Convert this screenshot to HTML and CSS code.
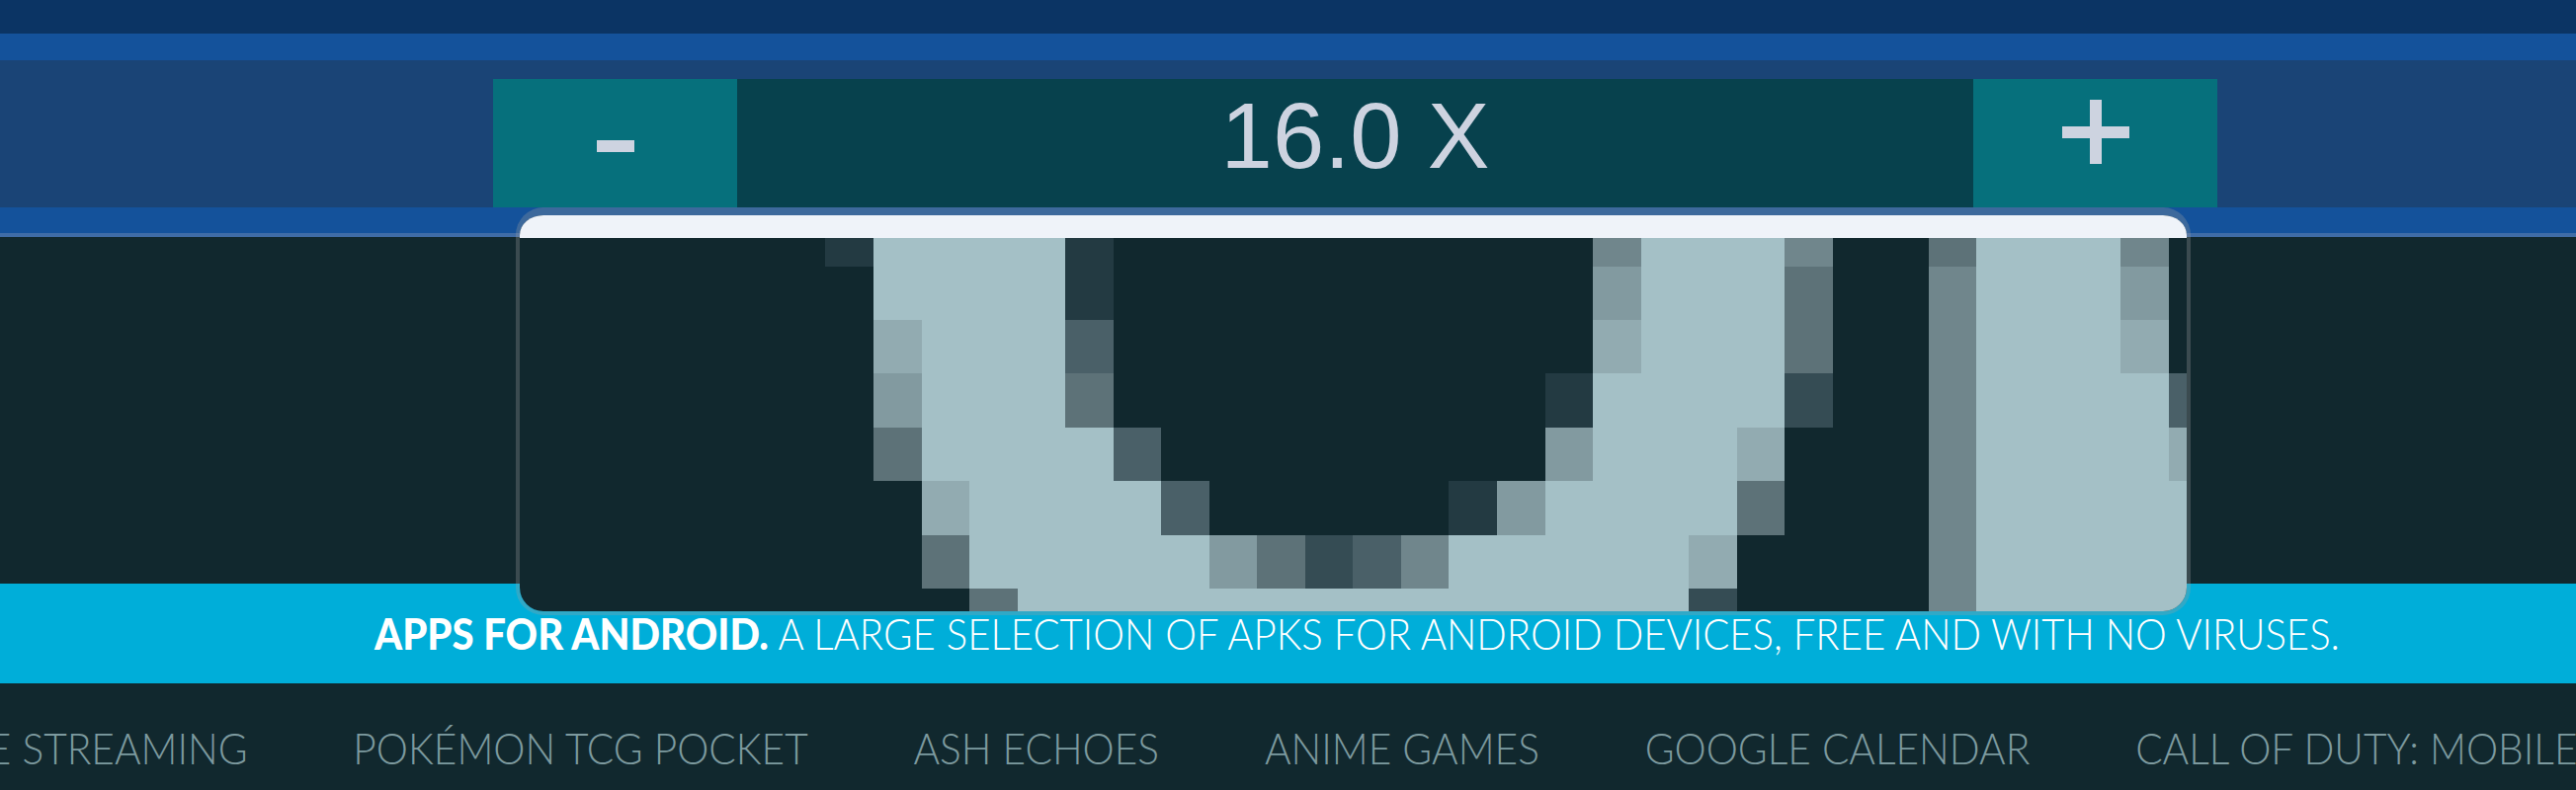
FILE: index.html
```html
<!DOCTYPE html>
<html lang="en">
<head>
    <meta charset="UTF-8">
    <meta name="viewport" content="width=device-width, initial-scale=1.0">
    <title>Apps for Android</title>
    <link rel="stylesheet" href="styles.css">
</head>
<body>
    <div class="top-strip"></div>
    <div class="blue-strip"></div>
    <div class="toolbar">
        <button class="zoom-button minus" aria-label="Zoom out"><span class="minus-bar"></span></button>
        <div class="zoom-value">16.0 X</div>
        <button class="zoom-button plus" aria-label="Zoom in">
            <svg width="68" height="65" viewBox="0 0 68 65"><path d="M28 0h12v27h28v12H40v26H28V39H0V27h28z" fill="#cdd3e0"/></svg>
        </button>
    </div>
    <div class="blue-strip lower"></div>
    <div class="dark-area"></div>
    <div class="banner">
        <p><strong>APPS FOR ANDROID.</strong> A LARGE SELECTION OF APKS FOR ANDROID DEVICES, FREE AND WITH NO VIRUSES.</p>
    </div>
    <nav class="topics">
        <a href="#">ANIME STREAMING</a>
        <a href="#">POKÉMON TCG POCKET</a>
        <a href="#">ASH ECHOES</a>
        <a href="#">ANIME GAMES</a>
        <a href="#">GOOGLE CALENDAR</a>
        <a href="#">CALL OF DUTY: MOBILE</a>
    </nav>

    <!-- loupe over the page, one svg unit is one captured pixel -->
    <div class="loupe">
        <div class="loupe-head"></div>
        <svg class="loupe-pixels" width="1687" height="378" viewBox="-7.375 0.477 34.755 6.936" preserveAspectRatio="none" shape-rendering="crispEdges">
            <g fill="#a4c0c6">
                <rect x="0" y="0" width="4" height="1"/>
                <rect x="16" y="0" width="3" height="1"/>
                <rect x="23" y="0" width="3" height="1"/>
                <rect x="0" y="1" width="4" height="1"/>
                <rect x="16" y="1" width="3" height="1"/>
                <rect x="23" y="1" width="3" height="1"/>
                <rect x="1" y="2" width="3" height="1"/>
                <rect x="16" y="2" width="3" height="1"/>
                <rect x="23" y="2" width="3" height="1"/>
                <rect x="1" y="3" width="3" height="1"/>
                <rect x="15" y="3" width="4" height="1"/>
                <rect x="23" y="3" width="4" height="1"/>
                <rect x="1" y="4" width="4" height="1"/>
                <rect x="15" y="4" width="3" height="1"/>
                <rect x="23" y="4" width="4" height="1"/>
                <rect x="2" y="5" width="4" height="1"/>
                <rect x="14" y="5" width="4" height="1"/>
                <rect x="23" y="5" width="5" height="1"/>
                <rect x="2" y="6" width="5" height="1"/>
                <rect x="12" y="6" width="5" height="1"/>
                <rect x="23" y="6" width="5" height="1"/>
                <rect x="3" y="7" width="14" height="1"/>
                <rect x="23" y="7" width="5" height="1"/>
            </g>
            <g fill="#233a42">
                <rect x="-1" y="0" width="1" height="1"/>
                <rect x="4" y="0" width="1" height="2"/>
                <rect x="14" y="3" width="1" height="1"/>
                <rect x="12" y="5" width="1" height="1"/>
            </g>
            <g fill="#354c54">
                <rect x="19" y="3" width="1" height="1"/>
                <rect x="9" y="6" width="1" height="1"/>
                <rect x="17" y="7" width="1" height="1"/>
            </g>
            <g fill="#4a6068">
                <rect x="4" y="2" width="1" height="1"/>
                <rect x="27" y="3" width="1" height="1"/>
                <rect x="5" y="4" width="1" height="1"/>
                <rect x="6" y="5" width="1" height="1"/>
                <rect x="10" y="6" width="1" height="1"/>
            </g>
            <g fill="#5d7278">
                <rect x="22" y="0" width="1" height="1"/>
                <rect x="19" y="1" width="1" height="2"/>
                <rect x="4" y="3" width="1" height="1"/>
                <rect x="0" y="4" width="1" height="1"/>
                <rect x="18" y="5" width="1" height="1"/>
                <rect x="1" y="6" width="1" height="1"/>
                <rect x="8" y="6" width="1" height="1"/>
                <rect x="2" y="7" width="1" height="1"/>
            </g>
            <g fill="#70868c">
                <rect x="15" y="0" width="1" height="1"/>
                <rect x="19" y="0" width="1" height="1"/>
                <rect x="26" y="0" width="1" height="1"/>
                <rect x="22" y="1" width="1" height="7"/>
                <rect x="11" y="6" width="1" height="1"/>
            </g>
            <g fill="#829aa0">
                <rect x="15" y="1" width="1" height="1"/>
                <rect x="26" y="1" width="1" height="1"/>
                <rect x="0" y="3" width="1" height="1"/>
                <rect x="14" y="4" width="1" height="1"/>
                <rect x="13" y="5" width="1" height="1"/>
                <rect x="7" y="6" width="1" height="1"/>
            </g>
            <g fill="#92abb1">
                <rect x="0" y="2" width="1" height="1"/>
                <rect x="15" y="2" width="1" height="1"/>
                <rect x="26" y="2" width="1" height="1"/>
                <rect x="18" y="4" width="1" height="1"/>
                <rect x="27" y="4" width="1" height="1"/>
                <rect x="1" y="5" width="1" height="1"/>
                <rect x="17" y="6" width="1" height="1"/>
            </g>
        </svg>
    </div>
</body>
</html>
```

FILE: styles.css
```css
:root {
    --navy: #0b3464;
    --blue: #14529b;
    --panel: #1a4476;
    --teal: #06707c;
    --teal-dark: #07414d;
    --dark: #11282e;
    --cyan: #00aed9;
    --icon: #cdd3e0;
}
html, body {
    height: 800px;
    overflow: hidden;
}
body {
    margin: 0;
    position: relative;
    background-color: var(--dark);
    font-family: "Lato", "Liberation Sans", sans-serif;
}
.top-strip {
    height: 34px;
    background-color: var(--navy);
}
.blue-strip {
    height: 27px;
    background-color: var(--blue);
}
.blue-strip.lower {
    height: 26px;
    border-bottom: 4px solid #3f6ca6;
}
.toolbar {
    display: flex;
    height: 130px;
    padding: 19px 0 0 499px;
    background-color: var(--panel);
}
.zoom-button {
    display: flex;
    align-items: center;
    justify-content: center;
    width: 247px;
    padding: 0;
    border: none;
    background-color: var(--teal);
}
.plus {
    padding-bottom: 23px;
}
.minus {
    padding-top: 6px;
}
.minus-bar {
    width: 38px;
    height: 12px;
    background-color: var(--icon);
}
.zoom-value {
    width: 1251px;
    background-color: var(--teal-dark);
    color: var(--icon);
    font-family: "Liberation Sans", Arial, sans-serif;
    font-size: 94px;
    line-height: 116px;
    text-align: center;
}
.dark-area {
    height: 351px;
}
.banner {
    height: 101px;
    padding-left: 140px;
    background-color: var(--cyan);
    color: #ffffff;
}
.banner p {
    margin: 0;
    padding-top: 23px;
    font-size: 44px;
    font-weight: 300;
    line-height: 54px;
    text-align: center;
    white-space: nowrap;
    transform: scaleX(0.912);
}
.banner strong {
    font-weight: 900;
}
.topics {
    display: flex;
    gap: 113px;
    margin-left: -117px;
    padding-top: 40px;
    white-space: nowrap;
    transform: scaleX(0.945);
    transform-origin: left top;
}
.topics a {
    color: #7d9a9f;
    font-size: 43px;
    font-weight: 300;
    line-height: 52px;
    text-decoration: none;
}
.loupe {
    position: absolute;
    top: 210px;
    left: 522px;
    width: 1687px;
    height: 401px;
    overflow: hidden;
    border: 4px solid rgba(160, 160, 160, 0.3);
    border-top-width: 8px;
    border-radius: 28px;
    background-color: var(--dark);
    background-clip: padding-box;
}
.loupe-head {
    height: 23px;
    background-color: #eff3f9;
}
.loupe-pixels {
    display: block;
}
```
